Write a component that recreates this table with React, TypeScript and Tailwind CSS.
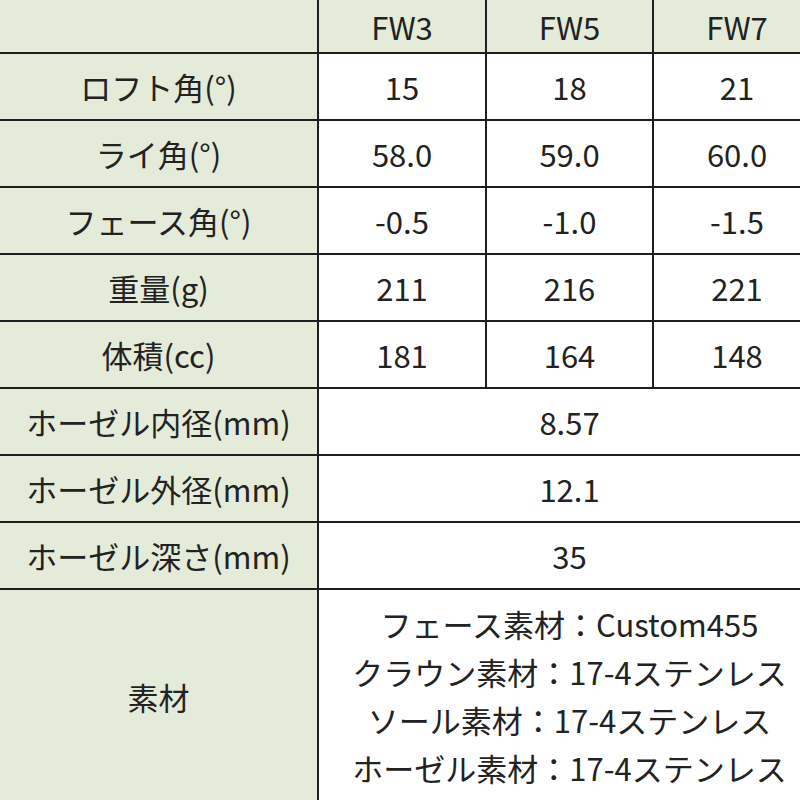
const rows: { label: string; values: string[] }[] = [
  { label: 'ロフト角(°)', values: ['15', '18', '21'] },
  { label: 'ライ角(°)', values: ['58.0', '59.0', '60.0'] },
  { label: 'フェース角(°)', values: ['-0.5', '-1.0', '-1.5'] },
  { label: '重量(g)', values: ['211', '216', '221'] },
  { label: '体積(cc)', values: ['181', '164', '148'] },
]

const merged: { label: string; value: string }[] = [
  { label: 'ホーゼル内径(mm)', value: '8.57' },
  { label: 'ホーゼル外径(mm)', value: '12.1' },
  { label: 'ホーゼル深さ(mm)', value: '35' },
]

const materials = [
  'フェース素材：Custom455',
  'クラウン素材：17-4ステンレス',
  'ソール素材：17-4ステンレス',
  'ホーゼル素材：17-4ステンレス',
]

const label = 'flex items-center justify-center bg-[#e4ebd8]'
const cell = 'flex items-center justify-center bg-white'

export default function App() {
  return (
    <div className="h-[800px] w-[800px] overflow-hidden bg-white">
      <div
        className="grid w-[820px] grid-cols-[317px_166px_165px_166px] grid-rows-[52px_repeat(8,65px)_212px] gap-[2px] bg-[#1e1e1e] text-[31px] leading-none text-[#222]"
        style={{ fontFamily: '"Noto Sans CJK JP", "Noto Sans", sans-serif' }}
      >
        <div className={label} />
        {['FW3', 'FW5', 'FW7'].map((h) => (
          <div key={h} className={label}>
            {h}
          </div>
        ))}

        {rows.map((r) => (
          <div key={r.label} className="contents">
            <div className={label}>{r.label}</div>
            {r.values.map((v, i) => (
              <div key={i} className={cell}>
                {v}
              </div>
            ))}
          </div>
        ))}

        {merged.map((r) => (
          <div key={r.label} className="contents">
            <div className={label}>{r.label}</div>
            <div className={`${cell} col-span-3`}>{r.value}</div>
          </div>
        ))}

        <div className={label}>素材</div>
        <div className="col-span-3 flex flex-col items-center justify-center bg-white leading-[48px]">
          {materials.map((m) => (
            <div key={m}>{m}</div>
          ))}
        </div>
      </div>
    </div>
  )
}
